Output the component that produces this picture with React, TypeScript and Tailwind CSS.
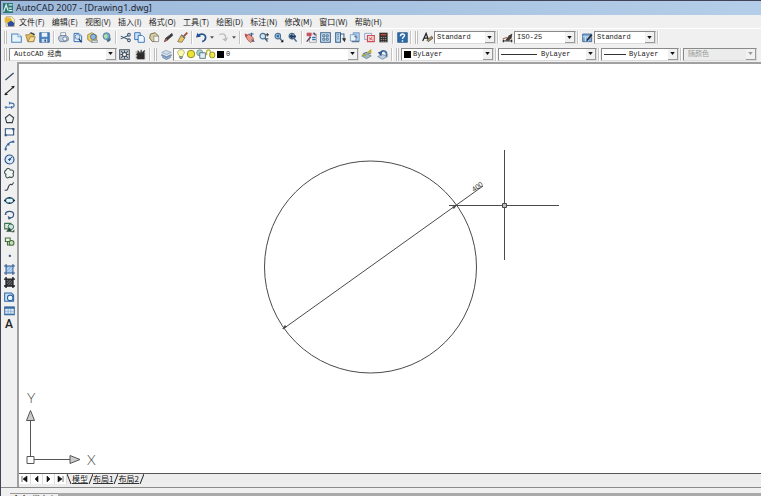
import type { ReactNode } from 'react';

const CJK = "font-['Noto_Sans_CJK_SC',sans-serif]";
const MONO = "font-['Liberation_Mono','Noto_Sans_CJK_SC',monospace]";

const menus = ['文件(F)', '编辑(E)', '视图(V)', '插入(I)', '格式(O)', '工具(T)', '绘图(D)', '标注(N)', '修改(M)', '窗口(W)', '帮助(H)'];

const NAVY = '#1f3864';
const BLUE = '#2f6db5';

const page = <path d="M3 2h7l4 4v8H3z" fill="#e4f1fb" stroke={BLUE} strokeWidth="1.4" />;
const lens = <><circle cx="7" cy="6" r="4" fill="#cfe6f5" stroke="#4c6f8c" strokeWidth="1.6" /><path d="M10 9l4 5" stroke="#4c6f8c" strokeWidth="2.2" /></>;

const art: Record<string, ReactNode> = {
  new: <><path d="M1 3h9l5 4v8H1z" fill="#e4f3fc" stroke="#4f86bb" strokeWidth="1.5" /><path d="M10 3v4h5" fill="#fff" stroke="#4f86bb" /></>,
  open: <><path d="M1 4h5l1-2h6v12H4z" fill="#e2bd5b" stroke="#86703a" /><path d="M4 14l4-7h7l-3 7z" fill="#f8df93" stroke="#86703a" /><path d="M8 1l6 3" stroke="#3b4758" strokeWidth="2" /></>,
  save: <><path d="M1 1h14v14H1z" fill="#4b82c0" stroke="#24558f" /><path d="M4 1h8v6H4z" fill="#e7f2fb" /><path d="M4 10h8v5H4z" fill="#c8dced" /><path d="M9 11v3" stroke={NAVY} strokeWidth="2" /></>,
  plot: <><path d="M4 1h7v5H4z" fill="#fff" stroke="#6a7d95" /><path d="M1 7l3-2h8l3 3v4l-4 2H3l-2-3z" fill="#bccbdd" stroke="#526884" /><circle cx="10" cy="10" r="3" fill="#edf3f8" stroke="#526884" /></>,
  preview: <>{page}<circle cx="8" cy="7" r="3.5" fill="#cfe7f7" stroke="#476f9e" /><path d="M10 10l4 5" stroke={NAVY} strokeWidth="2" /></>,
  publish: <><path d="M1 4l6-3 7 4v6l-7 4-6-4z" fill="#f1d05e" stroke="#847040" /><circle cx="9" cy="7" r="4" fill="#8bb8df" stroke="#315e93" /><path d="M7 12h8v3H7z" fill="#e9eef3" stroke="#637487" /></>,
  globe: <><circle cx="8" cy="6" r="5" fill="#70aec6" stroke="#3d6789" /><path d="M4 5l4-2 2 4-4 3z" fill="#b5dfad" /><path d="M8 12l6-4v4l-4 3z" fill="#4a6c86" /></>,
  cut: <><path d="M1 6l11 5M1 10l11-5" stroke="#3d5775" strokeWidth="1.5" /><circle cx="13" cy="4" r="2" fill="none" stroke="#3d5775" strokeWidth="1.5" /><circle cx="13" cy="12" r="2" fill="none" stroke="#3d5775" strokeWidth="1.5" /></>,
  copy: <><path d="M1 1h8v10H1z" fill="#cfe3f5" stroke={BLUE} strokeWidth="1.3" /><path d="M6 5h6l3 3v7H6z" fill="#eef7fd" stroke={BLUE} strokeWidth="1.3" /></>,
  paste: <><path d="M2 3l7-2 4 4-1 8-7 1-4-5z" fill="#d8cfa1" stroke="#756d51" strokeWidth="1.4" /><path d="M7 6h7v8H7z" fill="#f5f5ec" stroke="#777" /></>,
  match: <><path d="M2 14l2-5 9-7 1 3-8 7z" fill="#3b3b42" stroke="#303038" /><path d="M2 14l2-5 3 3z" fill="#b05d47" /></>,
  brush: <><path d="M15 1L9 7" stroke="#9a4a36" strokeWidth="2.5" /><path d="M1 14l5-9 5 4-4 6z" fill="#e8c65e" stroke="#6f6040" /><path d="M6 4l6 5" stroke="#6d7887" strokeWidth="2" /></>,
  undo: <><path d="M3 6c4-5 11-3 11 2 0 3-2 5-5 6" fill="none" stroke="#24538f" strokeWidth="2.4" /><path d="M0 8l2-7 5 6z" fill="#24538f" /></>,
  redo: <><path d="M2 4c6-3 10 0 9 5" fill="none" stroke="#bcbcbc" strokeWidth="2" /><path d="M6 10l9-2-4 6z" fill="#bcbcbc" /></>,
  pan: <><path d="M3 7l4-4 6 5 1 5-5 2-4-4z" fill="#e8a08e" stroke="#b0504b" strokeWidth="1.3" /><path d="M1 2l5 2-4 4z" fill="#b0504b" /><path d="M11 1v5M8 3h6M11 11l4 3" stroke="#2e5c94" strokeWidth="1.5" /></>,
  zoomrt: <>{lens}<path d="M11 4h5M13.5 1.5v5M11 10h4" stroke="#333" strokeWidth="1.4" /></>,
  zoomwin: <>{lens}<path d="M5 4h4v4H5z" fill={BLUE} /><path d="M15 11v4h-4z" fill="#111" /></>,
  zoomprev: <>{lens}<path d="M3 6l5-4v3h5v3H8v3z" fill={NAVY} /></>,
  props: <><path d="M5 3h10v12H5z" fill="#f4f4f4" stroke="#888" /><path d="M1 1h7v5H1z" fill="#c7515c" /><path d="M9 8h5M9 11h5" stroke={BLUE} strokeWidth="2" /><path d="M1 14l6-7M11 1l3 4" stroke="#5d3d61" strokeWidth="2" /></>,
  dc: <><path d="M1 1h14v14H1z" fill="#d9e9f5" stroke="#37618c" strokeWidth="1.5" /><path d="M4 4h3v3H4zM9 4h3v3H9zM4 9h3v3H4zM9 9h3v3H9z" fill="none" stroke="#37618c" strokeWidth="1.2" /></>,
  palettes: <><path d="M1 1h7v14H1z" fill="#c5dcf0" stroke="#37618c" strokeWidth="1.5" /><path d="M3 4h3M3 7h3M3 10h3" stroke="#37618c" /><path d="M8 3h5v9" fill="none" stroke="#37618c" strokeWidth="1.5" /><path d="M10 9h6l-2 6z" fill="#333" /></>,
  sheet: <><path d="M6 1h9v12H6z" fill="#a9cae8" stroke="#5f89b4" /><path d="M2 4h8v9H2z" fill="#e7f2f9" stroke="#5f89b4" /><path d="M4 14h11M8 6l4 2" stroke="#60718c" strokeWidth="2" /></>,
  markup: <><path d="M1 2h10v9H1z" fill="#ecf3fb" stroke="#7286aa" /><path d="M5 5h10v9H5z" fill="#f7dada" stroke="#cf4c58" strokeWidth="1.6" /><path d="M7 8l6 4M12 7l-4 5" stroke="#cf4c58" strokeWidth="1.3" /></>,
  calc: <><path d="M2 1h12v14H2z" fill="#31302e" /><path d="M4 3h8v2H4z" fill="#c74d3d" /><path d="M4 8h8M4 11h8M4 14h8" stroke="#bdb8a9" strokeDasharray="2 1" /></>,
  help: <><path d="M1 1h14v14H1z" fill="#2f6da9" stroke="#194779" /><path d="M5 6c0-4 6-4 6-1 0 2-3 2-3 5M8 12v2" fill="none" stroke="#fff" strokeWidth="2" /></>,
  textstyle: <><path d="M1 13L6 2l4 11M3 9h5" fill="none" stroke="#222" strokeWidth="1.8" /><path d="M7 12l7-6 2 3-7 5z" fill="#a99468" stroke="#4a4339" /></>,
  dimstyle: <><path d="M1 13h14M2 11v4M14 11v4" stroke="#222" strokeWidth="1.4" /><path d="M5 12l5-7 5-3-1 7-5 4z" fill="#443c36" /><path d="M1 10l6-2" stroke="#a4513b" strokeWidth="1.5" /></>,
  tablestyle: <><path d="M1 3h13v11H1z" fill="#82afd9" stroke="#426b99" strokeWidth="1.4" /><path d="M1 7h13M5 7v7M9 7v7" stroke="#e9f2fa" /><path d="M6 12l7-9 2 2-7 8z" fill="#292d35" /></>,
  gear: <><path d="M1 1h14v14H1z" fill="#cbd4dd" stroke="#48545f" strokeWidth="1.5" /><path d="M3 3l10 10M13 3L3 13M8 2v12M2 8h12" stroke="#48545f" strokeWidth="1.5" /><circle cx="8" cy="8" r="3" fill="#f4f4f4" stroke="#48545f" strokeWidth="1.5" /></>,
  myws: <><path d="M1 3h14v12H1z" fill="#b8b8b8" /><path d="M4 6h9v8H4zM4 2l2 4M9 1v5M14 2l-3 4M2 8h3M2 12h3" fill="#2a2a2a" stroke="#2a2a2a" strokeWidth="1.5" /></>,
  layers: <><path d="M1 5l6-3 8 3-7 3z" fill="#d1deeb" stroke="#7d9ab8" /><path d="M1 8l7 3 7-3v2l-7 3-7-3z" fill="#7fa4ca" stroke="#6685a7" /><path d="M2 12l6 3 6-3" fill="none" stroke="#7694b3" strokeWidth="1.5" /></>,
  layercur: <><path d="M1 10l7-3 7 3-7 4z" fill="#9fb8c7" stroke="#657f90" /><path d="M3 7l5-2 6 2" fill="none" stroke="#657f90" strokeWidth="2" /><path d="M9 6l5-4v4M2 8l5 2" fill="none" stroke="#b8a72b" strokeWidth="2" /></>,
  layerprev: <><path d="M1 11l7-3 7 3-7 4z" fill="#bdd0e2" stroke="#607b99" /><path d="M5 8c0-8 9-6 9 0v3" fill="none" stroke="#4a70a0" strokeWidth="2.6" /><path d="M1 5l7-2-2 7z" fill="#31598e" /></>,
  bulb: <><path d="M5 10C0 5 4 1 8 1s8 4 3 9v2H5z" fill="#fbfab0" stroke="#8d914c" /><path d="M5 13h6M6 15h4" stroke="#59636e" strokeWidth="1.5" /></>,
  sun: <circle cx="8" cy="8" r="6" fill="#eee331" stroke="#85872e" strokeWidth="1.5" />,
  vpfreeze: <><circle cx="6" cy="6" r="5" fill="#a8d0c5" stroke="#537d7f" /><path d="M6 6h9v9H6z" fill="#e5eff3" stroke="#587888" strokeWidth="1.5" /></>,
  lock: <><path d="M1 10V5c0-5 6-5 6 0v3" fill="none" stroke="#b3b532" strokeWidth="2" /><rect x="6" y="5" width="8" height="9" rx="3" fill="#eee44c" stroke="#8b8b28" strokeWidth="1.5" /></>,
  line: <path d="M2 13L14 3" stroke="#33475e" strokeWidth="1.8" />,
  xline: <><path d="M1 14L15 2" stroke="#222" strokeWidth="1.8" /><path d="M2 11l4 3-5 1zM10 2l4 3 1-4z" fill="#222" /></>,
  pline: <path d="M1 12h10c5 0 5-6 0-6H8M3 10v4M8 4v4M11 10v4" fill="none" stroke="#4770a8" strokeWidth="1.6" />,
  polygon: <path d="M8 2l6 5-2 7H4L2 7z" fill="none" stroke="#303c49" strokeWidth="1.6" />,
  rect: <><path d="M2 4h12v9H2z" fill="#f4f8fc" stroke="#34557c" strokeWidth="1.6" /><path d="M1 12h3v3H1zM12 3h3v3h-3z" fill="#34557c" /></>,
  arc: <><path d="M2 15C2 8 7 3 14 2" fill="none" stroke="#356097" strokeWidth="1.7" /><path d="M1 12h3v3H1zM5 5h3v3H5zM12 1h3v3h-3z" fill="#356097" /></>,
  circle: <><circle cx="8" cy="8" r="6.5" fill="#dceaf7" stroke="#28548d" strokeWidth="1.7" /><path d="M8 8l4-4M6 8h4M8 6v4" stroke="#28548d" strokeWidth="1.5" /></>,
  cloud: <path d="M3 3c2-4 6-2 6 0 5-1 6 3 4 5 2 4-1 7-5 5-3 3-7 0-5-4-3-1-3-4 0-6z" fill="#f2f6f4" stroke="#40564f" strokeWidth="1.6" />,
  spline: <path d="M1 13c6 3 4-7 8-8 2-1 2 3 5-3" fill="none" stroke="#333f4d" strokeWidth="1.6" />,
  ellipse: <><ellipse cx="8" cy="8" rx="6" ry="4" fill="#e1f0f3" stroke="#245e78" strokeWidth="1.9" /><path d="M0 8h3M13 8h3M8 3v2M8 11v2" stroke="#182d48" strokeWidth="2.2" /></>,
  ellarc: <><path d="M2 8c0-6 12-6 12 0 0 4-3 5-6 5" fill="none" stroke="#35577e" strokeWidth="1.7" /><path d="M1 8h3M6 11l4 2-3 2z" fill="#35577e" stroke="#35577e" /></>,
  insert: <><path d="M1 2h9v8H1z" fill="#dcebdd" stroke="#3a704c" strokeWidth="1.5" /><circle cx="10" cy="7" r="4" fill="#cae2e7" stroke="#3a704c" strokeWidth="1.4" /><path d="M3 14l5-6 4 6zM15 11v4h-4z" fill="#2e4e3b" /></>,
  block: <><path d="M2 3h7v5H2z" fill="#eaf2e3" stroke="#456b3b" strokeWidth="1.5" /><circle cx="11" cy="10" r="3.5" fill="#c5dcb9" stroke="#456b3b" strokeWidth="1.5" /><path d="M5 8v5h4" fill="none" stroke="#456b3b" strokeWidth="1.5" /></>,
  point: <path d="M7 7h3v3H7z" fill="#375378" />,
  hatch: <><path d="M3 3h10v10H3z" fill="#91bde9" /><path d="M3 0v16M13 0v16M0 3h16M0 13h16" stroke="#2c5688" strokeWidth="1.5" /><path d="M4 8l4-4M5 12l7-7M9 12l4-4" stroke="#eaf4ff" /></>,
  gradient: <><path d="M3 3h10v10H3z" fill="#6b7075" /><path d="M3 0v16M13 0v16M0 3h16M0 13h16" stroke="#191c20" strokeWidth="2" /><path d="M4 12l8-8M4 8l4-4M8 12l4-4" stroke="#202428" strokeWidth="1.5" /></>,
  region: <><path d="M1 3h10l3 3v9H1z" fill="#cde2f5" stroke="#2d65a7" strokeWidth="1.5" /><circle cx="9" cy="10" r="4" fill="#eff8ff" stroke="#2d65a7" strokeWidth="1.5" /></>,
  table: <><path d="M1 3h14v11H1z" fill="#e7f1fa" stroke="#366aa3" strokeWidth="1.5" /><path d="M1 4h14" stroke="#366aa3" strokeWidth="3" /><path d="M1 9h14M1 12h14M6 5v9M10 5v9" stroke="#759fc7" /></>,
  app: <><path d="M0 0h16v16H0z" fill="#2d7777" /><path d="M1 14L5 3l3 9M9 3h6M9 8h5M9 12h6" fill="none" stroke="#d9f1e7" strokeWidth="2" /></>,
  doc: <><path d="M3 1h8l4 4v10H3z" fill="#f7f2d8" stroke="#a09268" /><path d="M1 2h8l4 6-6 3-6-2z" fill="#e6b737" /><path d="M5 10l5-3 5 3-1 5H6z" fill="#2c4c9b" /></>,
};

const Icon = ({ name, size = 'h-[11px] w-[11px]' }: { name: string; size?: string }) => (
  <svg viewBox="0 0 16 16" className={`${size} block shrink-0`} aria-hidden="true">
    {art[name]}
  </svg>
);

const Tool = ({ name, width = 'flex-1' }: { name: string; width?: string }) => (
  <button type="button" aria-label={name} className={`flex h-[14px] min-w-0 items-center justify-center ${width}`}>
    <Icon name={name} />
  </button>
);

const Group = ({ names, width }: { names: string[]; width: string }) => (
  <div className={`flex shrink-0 ${width}`}>
    {names.map((name) => (
      <Tool key={name} name={name} />
    ))}
  </div>
);

const Sep = () => <span className="mx-[1px] h-[13px] w-[2px] shrink-0 border-l border-[#c4c4c4] bg-white" />;
const Grip = () => <span className="mx-[2px] h-[13px] w-[3px] shrink-0 border-x border-[#bdbdbd] bg-white" />;

const Caret = () => (
  <button type="button" aria-label="history" className="flex h-[14px] w-2 shrink-0 items-center justify-center">
    <svg viewBox="0 0 6 4" className="h-[3px] w-1"><path d="M0 0h6L3 4z" fill="#555" /></svg>
  </button>
);

type DropProps = { label: string; value: string; width: string; pad?: string; disabled?: boolean; children?: ReactNode };

const Drop = ({ label, value, width, pad = 'pl-[2px]', disabled, children }: DropProps) => (
  <div className={`relative h-[13px] shrink-0 border border-[#8a8a8a] border-r-[#dcdcdc] border-b-[#dcdcdc] ${disabled ? 'bg-[#ececec]' : 'bg-white'} ${width}`}>
    <select
      aria-label={label}
      disabled={disabled}
      className={`block h-[11px] w-full appearance-none bg-transparent text-[7px] leading-[11px] outline-none disabled:opacity-100 ${MONO} ${pad} ${disabled ? 'text-[#999]' : 'text-[#222]'}`}
    >
      <option>{value}</option>
    </select>
    <div className="pointer-events-none absolute inset-y-0 left-[2px] flex items-center">{children}</div>
    <span className="pointer-events-none absolute inset-y-0 right-0 flex w-[10px] items-center justify-center border-r border-b border-[#9a9a9a] bg-[#f1f1f1]">
      <svg viewBox="0 0 6 4" className="h-[3px] w-[5px]"><path d="M0 0h6L3 4z" fill={disabled ? '#999' : '#111'} /></svg>
    </span>
  </div>
);

const drawTools = ['line', 'xline', 'pline', 'polygon', 'rect', 'arc', 'circle', 'cloud', 'spline', 'ellipse', 'ellarc', 'insert', 'block', 'point', 'hatch', 'gradient', 'region', 'table'];

const Ucs = () => (
  <svg viewBox="0 0 84 80" className="absolute bottom-[3px] left-[5px] h-[80px] w-[84px]" fill="none" stroke="#555">
    <path d="M6.5 66V31M10 69.5h36" />
    <path d="M3 66.5h7v7H3z" fill="#fff" />
    <path d="M6.5 20.5l-4 10h8zM56 69.5l-10-4v8z" fill="#ccc" />
    <g stroke="none" fill="#444" className="font-['Lato',sans-serif] text-[14px] font-light">
      <text x="3" y="13">Y</text>
      <text x="63" y="75">X</text>
    </g>
  </svg>
);

const Canvas = () => (
  <main className="relative min-h-0 flex-1 overflow-hidden bg-white">
    <svg className="absolute top-0 left-0 h-full w-full" fill="none" stroke="#4a4a4a">
      <circle cx="351.5" cy="203" r="106" />
      <path d="M264 265L464 122" />
      <path d="M263 265l5-2-2-2zM438 141l-5 2 2 2z" fill="#4a4a4a" stroke="none" />
      <text transform="translate(455 128) rotate(-36)" stroke="none" fill="#333" className="font-['Liberation_Sans',sans-serif] text-[7px]">400</text>
      <path d="M430 141.5h110M485.5 86v110" />
      <path d="M483.5 139.5h4v4h-4z" fill="#bbb" />
    </svg>
    <Ucs />
  </main>
);

const tabNav = ['M1 1v6M6 1v6L2 4z', 'M5 1v6L2 4z', 'M2 1v6l3-3z', 'M1 1v6l4-3zM6 1v6'];

const LayoutTabs = () => (
  <div className="flex h-[14px] shrink-0 border-t border-[#555] bg-[#ededed]">
    <div className="flex h-[10px] bg-white">
      {tabNav.map((d) => (
        <button key={d} type="button" aria-label="sheet" className="flex w-3 items-center justify-center border-r border-[#ddd]">
          <svg viewBox="0 0 7 8" className="h-2 w-[7px]" fill="#111" stroke="#111" strokeWidth="0.6"><path d={d} /></svg>
        </button>
      ))}
    </div>
    {['模型', '布局1', '布局2'].map((tab, i) => (
      <div key={tab} className="flex">
        {i === 0 && <svg viewBox="0 0 5 10" className="h-[10px] w-[5px]"><path d="M0 0l4 10" stroke="#222" /></svg>}
        <button type="button" className={`h-[10px] border-b border-[#333] text-[8px] leading-[9px] text-[#111] ${CJK} ${i === 0 ? 'bg-white' : ''}`}>{tab}</button>
        <svg viewBox="0 0 5 10" className="h-[10px] w-[5px]"><path d="M1 10L5 0" stroke="#222" /></svg>
      </div>
    ))}
  </div>
);

export default function App() {
  return (
    <div className="flex h-screen flex-col overflow-hidden border-t border-l border-[#404456] bg-[#f0f0f0]">
      <header className="flex h-[14px] shrink-0 items-center gap-[3px] bg-gradient-to-r from-[#9db9da] to-[#b4cee9] pl-[2px]">
        <Icon name="app" size="h-[10px] w-[10px]" />
        <h1 className="font-['Noto_Sans',sans-serif] text-[9px] leading-[14px] whitespace-nowrap text-[#1c2533]">AutoCAD 2007 - [Drawing1.dwg]</h1>
      </header>
      <nav className="flex h-[13px] shrink-0 items-center pl-[3px]">
        <Icon name="doc" />
        <ul className={`ml-1 flex gap-[7px] text-[8px] leading-[13px] whitespace-nowrap text-[#222] ${CJK}`}>
          {menus.map((menu) => (
            <li key={menu}>
              <button type="button">{menu}</button>
            </li>
          ))}
        </ul>
      </nav>
      <div className="flex h-[18px] shrink-0 items-center border-t border-white pl-[1px]">
        <Grip />
        <Group names={['new', 'open', 'save']} width="w-[43px]" />
        <Sep />
        <Group names={['plot', 'preview', 'publish', 'globe']} width="w-[58px]" />
        <Sep />
        <Group names={['cut', 'copy', 'paste', 'match', 'brush']} width="w-[72px]" />
        <Sep />
        <Tool name="undo" width="w-[14px]" />
        <Caret />
        <Tool name="redo" width="w-[14px]" />
        <Caret />
        <Sep />
        <Group names={['pan', 'zoomrt', 'zoomwin', 'zoomprev']} width="w-[58px]" />
        <Sep />
        <Group names={['props', 'dc', 'palettes', 'sheet', 'markup', 'calc']} width="w-[87px]" />
        <Sep />
        <Tool name="help" width="w-[14px]" />
        <Sep />
        <Grip />
        <Tool name="textstyle" width="w-[14px]" />
        <Drop label="文字样式" value="Standard" width="w-[62px]" />
        <Sep />
        <Tool name="dimstyle" width="w-[14px]" />
        <Drop label="标注样式" value="ISO-25" width="w-[62px]" />
        <Sep />
        <Tool name="tablestyle" width="w-[14px]" />
        <Drop label="表格样式" value="Standard" width="w-[62px]" />
        <Sep />
      </div>
      <div className="flex h-4 shrink-0 items-center pl-[1px]">
        <Grip />
        <Drop label="工作空间" value="AutoCAD 经典" width="w-[108px]" pad="pl-1" />
        <Group names={['gear', 'myws']} width="w-[31px]" />
        <Sep />
        <Grip />
        <Tool name="layers" width="w-[14px]" />
        <Drop label="图层" value="0" width="w-[186px]" pad="pl-[52px]">
          {['bulb', 'sun', 'vpfreeze', 'lock'].map((name) => (
            <Icon key={name} name={name} size="h-[10px] w-[10px]" />
          ))}
          <span className="ml-[1px] h-[7px] w-[7px] bg-black" />
        </Drop>
        <Group names={['layercur', 'layerprev']} width="w-[31px]" />
        <Sep />
        <Grip />
        <Drop label="颜色" value="ByLayer" width="w-[93px]" pad="pl-[11px]">
          <span className="h-[7px] w-[7px] bg-black" />
        </Drop>
        <Sep />
        <Drop label="线型" value="ByLayer" width="w-[99px]" pad="pl-[42px]">
          <span className="h-px w-9 bg-[#333]" />
        </Drop>
        <Sep />
        <Drop label="线宽" value="ByLayer" width="w-[78px]" pad="pl-[27px]">
          <span className="h-px w-[22px] bg-[#333]" />
        </Drop>
        <Sep />
        <Drop label="打印样式" value="随颜色" width="w-[74px]" pad="pl-1" disabled />
      </div>
      <div className="flex min-h-0 flex-1">
        <aside className="w-4 shrink-0 pt-2">
          <div className="flex h-[261px] flex-col">
            {drawTools.map((name) => (
              <button key={name} type="button" aria-label={name} className="flex min-h-0 flex-1 items-center justify-center">
                <Icon name={name} />
              </button>
            ))}
            <button type="button" aria-label="多行文字" className="min-h-0 flex-1 font-['Roboto',sans-serif] text-[12px] leading-[14px] font-medium text-[#222]">A</button>
          </div>
        </aside>
        <div className="flex min-w-0 flex-1 flex-col border-t-2 border-l-2 border-[#a0a0a0]">
          <Canvas />
          <LayoutTabs />
        </div>
      </div>
      <footer className="h-[9px] shrink-0 overflow-hidden border-t border-[#8b8b8b] pt-[5px] pl-[9px]">
        <div className={`flex bg-[#aaa] text-[8px] leading-[9px] text-[#222] ${CJK}`}>
          <span className="border-t border-[#999] bg-[#eee] px-[2px]">命令: 指定点</span>
        </div>
      </footer>
    </div>
  );
}
